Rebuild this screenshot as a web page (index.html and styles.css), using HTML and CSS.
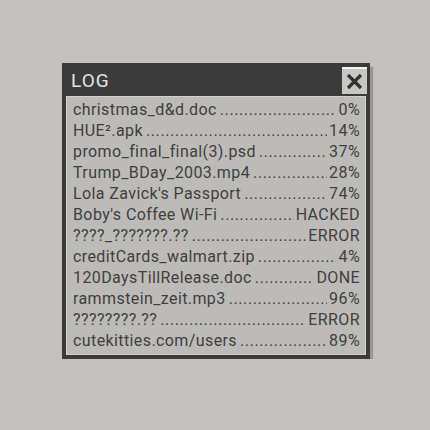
FILE: index.html
```html
<!DOCTYPE html>
<html>
<head>
  <meta charset="utf-8" />
  <title>LOG</title>
  <link rel="stylesheet" href="styles.css">
</head>
<body>
  <div class="window">
    <div class="titlebar">
      <span class="title">LOG</span>
      <div class="close">
        <svg width="17" height="17" viewBox="0 0 17 17"><path d="M2 2 L15 15 M15 2 L2 15" stroke="#333" stroke-width="3.2" /></svg>
      </div>
    </div>
    <div class="panel">
      <div class="row"><span class="name">christmas_d&amp;d.doc</span><span class="dots"></span><span class="val">0%</span></div>
      <div class="row"><span class="name">HUE².apk</span><span class="dots"></span><span class="val">14%</span></div>
      <div class="row"><span class="name">promo_final_final(3).psd</span><span class="dots"></span><span class="val">37%</span></div>
      <div class="row"><span class="name">Trump_BDay_2003.mp4</span><span class="dots"></span><span class="val">28%</span></div>
      <div class="row"><span class="name">Lola Zavick's Passport</span><span class="dots"></span><span class="val">74%</span></div>
      <div class="row"><span class="name">Boby's Coffee Wi-Fi</span><span class="dots"></span><span class="val">HACKED</span></div>
      <div class="row"><span class="name">????_???????.??</span><span class="dots"></span><span class="val">ERROR</span></div>
      <div class="row"><span class="name">creditCards_walmart.zip</span><span class="dots"></span><span class="val">4%</span></div>
      <div class="row"><span class="name">120DaysTillRelease.doc</span><span class="dots"></span><span class="val">DONE</span></div>
      <div class="row"><span class="name">rammstein_zeit.mp3</span><span class="dots"></span><span class="val">96%</span></div>
      <div class="row"><span class="name">????????.??</span><span class="dots"></span><span class="val">ERROR</span></div>
      <div class="row"><span class="name">cutekitties.com/users</span><span class="dots"></span><span class="val">89%</span></div>
    </div>
  </div>
</body>
</html>
```

FILE: styles.css
```css
body {
  margin: 0;
  padding: 63px 0 0 62px;
  background: #c4c2bf;
  font-family: Roboto, "Liberation Sans", sans-serif;
}

.window {
  width: 300px;
  background: #3b3b3b;
  padding: 0 4px 4px 4px;
  box-shadow: 3px 4px 1px rgba(0, 0, 0, 0.22);
}

.titlebar {
  height: 33px;
  display: flex;
  align-items: center;
  justify-content: space-between;
}

.title {
  color: #e2e2e2;
  font-size: 19px;
  letter-spacing: 1px;
  margin-left: 5px;
  margin-top: 2px;
}

.close {
  width: 25px;
  height: 25px;
  margin-right: -1px;
  margin-top: 1px;
  background: #c9c7c4;
  border-top: 2px solid #f2f2f2;
  display: flex;
  align-items: center;
  justify-content: center;
}

.panel {
  background: #bdbbb8;
  border: 1px solid #d3d1ce;
  padding: 2px 5px 3px 6px;
  color: #3f3f3f;
  font-size: 16px;
  letter-spacing: 0.4px;
}

.row {
  display: flex;
  height: 21px;
  line-height: 21px;
  white-space: nowrap;
}

.dots {
  flex: 1;
  overflow: hidden;
  margin: 0 2px 0 3px;
}

.dots::after {
  content: "....................................................................................................";
  letter-spacing: 0.6px;
}
```
